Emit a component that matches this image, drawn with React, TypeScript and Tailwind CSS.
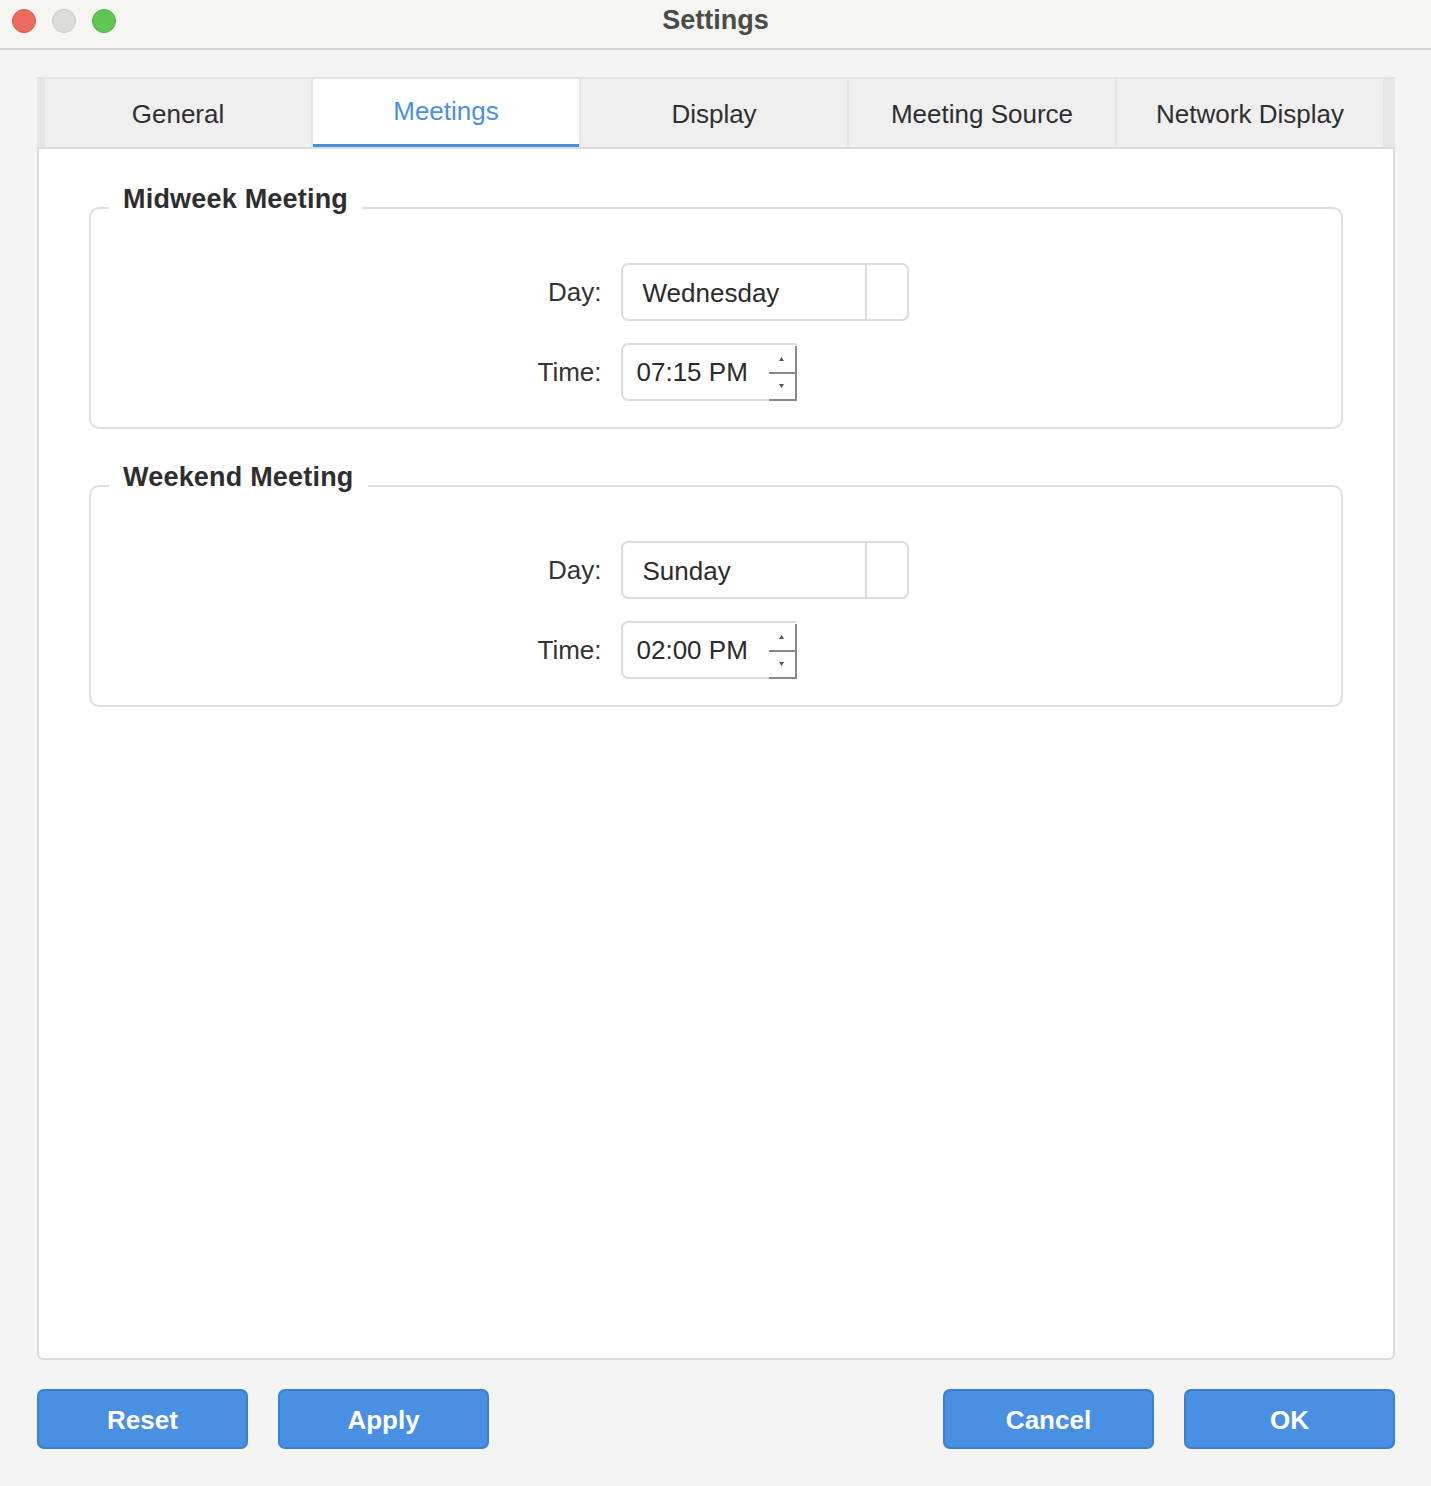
import React from 'react';

const tabs = ['General', 'Meetings', 'Display', 'Meeting Source', 'Network Display'];

const font = "font-['Liberation_Sans',Arial,sans-serif]";

const ComboBox = ({ value }: { value: string }) => (
    <div className="flex h-[58px] w-[288px] items-stretch rounded-[7px] border-2 border-[#dcdcdc] bg-white">
        <div className="flex flex-1 items-center pl-[20px] pt-[2px] text-[26px] text-[#2b2b2b]">{value}</div>
        <div className="w-[42px] border-l-2 border-[#dcdcdc]" />
    </div>
);

const TimeEdit = ({ value }: { value: string }) => (
    <div className="flex h-[58px] w-[176px] items-stretch rounded-l-[7px] rounded-r-[2px] border-2 border-r-0 border-[#dcdcdc] bg-white">
        <div className="flex flex-1 items-center pl-[14px] text-[26px] text-[#2b2b2b]">{value}</div>
        <div className="-mb-[2px] mt-[1px] flex w-[28px] flex-col border-b-2 border-r-2 border-[#8a8a8a]">
            <div className="flex flex-1 items-center justify-center border-b-2 border-[#8a8a8a]">
                <svg width="5" height="4" viewBox="0 0 5 4">
                    <path d="M2.5 0 L5 4 L0 4 Z" fill="#555" />
                </svg>
            </div>
            <div className="flex flex-1 items-center justify-center">
                <svg width="5" height="4" viewBox="0 0 5 4">
                    <path d="M0 0 L5 0 L2.5 4 Z" fill="#555" />
                </svg>
            </div>
        </div>
    </div>
);

const MeetingGroup = ({ title, day, time }: { title: string; day: string; time: string }) => (
    <fieldset className="rounded-[10px] border-2 border-[#dedede] px-0 pb-[26px] pt-[30px]">
        <legend className="ml-[18px] px-[14px] pb-[18px] text-[27px] font-bold leading-[32px] tracking-[0.2px] text-[#2e2e2e]">
            {title}
        </legend>
        <div className="flex justify-center pl-[14px]">
            <div className="grid grid-cols-[auto_auto] items-center gap-x-[19px] gap-y-[22px]">
                <span className="text-right text-[26px] text-[#333]">Day:</span>
                <ComboBox value={day} />
                <span className="text-right text-[26px] text-[#333]">Time:</span>
                <TimeEdit value={time} />
            </div>
        </div>
    </fieldset>
);

const Button = ({ label }: { label: string }) => (
    <button className="h-[60px] w-[211px] rounded-[7px] border-2 border-[#3b7fd4] bg-[#4a90e2] pt-[2px] text-[26px] font-bold text-white">
        {label}
    </button>
);

const App = () => {
    return (
        <div className={`flex h-[1486px] w-full flex-col bg-[#f4f4f4] ${font}`}>
            {/* title bar */}
            <div className="grid h-[50px] grid-cols-[1fr_auto_1fr] items-center border-b-2 border-[#d6d6d4] bg-[#f5f5f2] px-[12px]">
                <div className="flex items-center gap-[16px] pb-[8px]">
                    <span className="h-[24px] w-[24px] rounded-full border border-[#d9584c] bg-[#ed6a5e]" />
                    <span className="h-[24px] w-[24px] rounded-full border border-[#c6c6c2] bg-[#dcdcd8]" />
                    <span className="h-[24px] w-[24px] rounded-full border border-[#4fb043] bg-[#61c554]" />
                </div>
                <div className="pb-[10px] text-[27px] font-bold text-[#4a4a4a]">Settings</div>
                <div />
            </div>

            <div className="flex flex-1 flex-col pb-[37px] pl-[37px] pr-[36px] pt-[27px]">
                {/* tabs */}
                <div className="flex h-[71px] gap-[2px] border-t-2 border-[#e2e2e2] bg-[#e6e6e6] pl-[8px] pr-[12px]">
                    {tabs.map((tab) =>
                        tab === 'Meetings' ? (
                            <div
                                key={tab}
                                className="flex flex-1 items-center justify-center border-b-4 border-[#4a90e2] bg-white pb-[1px] text-[26px] text-[#4a90e2]"
                            >
                                {tab}
                            </div>
                        ) : (
                            <div
                                key={tab}
                                className="flex flex-1 items-center justify-center bg-[#efefef] pt-[2px] text-[26px] text-[#2f2f2f]"
                            >
                                {tab}
                            </div>
                        )
                    )}
                </div>

                {/* panel */}
                <div className="-mt-[1px] flex flex-1 flex-col gap-[32px] rounded-b-[6px] border-2 border-[#dcdcdc] bg-white px-[50px] pt-[34px]">
                    <MeetingGroup title="Midweek Meeting" day="Wednesday" time="07:15 PM" />
                    <MeetingGroup title="Weekend Meeting" day="Sunday" time="02:00 PM" />
                </div>

                {/* buttons */}
                <div className="mt-[29px] flex justify-between">
                    <div className="flex gap-[30px]">
                        <Button label="Reset" />
                        <Button label="Apply" />
                    </div>
                    <div className="flex gap-[30px]">
                        <Button label="Cancel" />
                        <Button label="OK" />
                    </div>
                </div>
            </div>
        </div>
    );
};

export default App;
